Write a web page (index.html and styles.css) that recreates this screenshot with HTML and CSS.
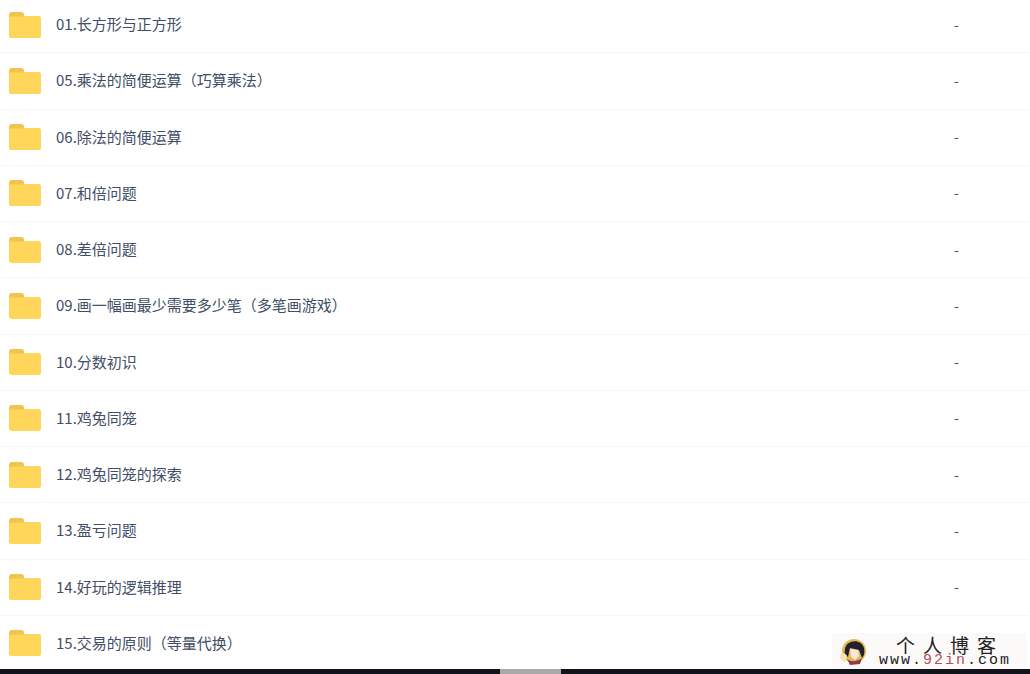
FILE: index.html
```html
<!DOCTYPE html>
<html>

    <head>
        <title>Files</title>
        <link rel="stylesheet" href="styles.css">
    </head>

    <body>
        <!-- Folder symbol, used by every row -->
        <svg class="hidden-defs" width="0" height="0">
            <symbol id="folder" viewBox="0 0 32 26">
                <path d="M0 3a3 3 0 0 1 3-3h9a3 3 0 0 1 3 3v3H0z" fill="#f3c350"/>
                <rect x="0" y="4" width="32" height="22" rx="2.500" fill="#ffd659"/>
                <path d="M0 6.500A2.500 2.500 0 0 1 2.500 4H15v.5H3A3 3 0 0 0 0 7.500z" fill="#f3c350"/>
            </symbol>
        </svg>

        <main class="file-list">
            <div class="file-row">
                <svg class="folder-icon"><use href="#folder"/></svg>
                <span class="file-name">01.长方形与正方形</span>
                <span class="file-size">-</span>
            </div>
            <div class="file-row">
                <svg class="folder-icon"><use href="#folder"/></svg>
                <span class="file-name">05.乘法的简便运算（巧算乘法）</span>
                <span class="file-size">-</span>
            </div>
            <div class="file-row">
                <svg class="folder-icon"><use href="#folder"/></svg>
                <span class="file-name">06.除法的简便运算</span>
                <span class="file-size">-</span>
            </div>
            <div class="file-row">
                <svg class="folder-icon"><use href="#folder"/></svg>
                <span class="file-name">07.和倍问题</span>
                <span class="file-size">-</span>
            </div>
            <div class="file-row">
                <svg class="folder-icon"><use href="#folder"/></svg>
                <span class="file-name">08.差倍问题</span>
                <span class="file-size">-</span>
            </div>
            <div class="file-row">
                <svg class="folder-icon"><use href="#folder"/></svg>
                <span class="file-name">09.画一幅画最少需要多少笔（多笔画游戏）</span>
                <span class="file-size">-</span>
            </div>
            <div class="file-row">
                <svg class="folder-icon"><use href="#folder"/></svg>
                <span class="file-name">10.分数初识</span>
                <span class="file-size">-</span>
            </div>
            <div class="file-row">
                <svg class="folder-icon"><use href="#folder"/></svg>
                <span class="file-name">11.鸡兔同笼</span>
                <span class="file-size">-</span>
            </div>
            <div class="file-row">
                <svg class="folder-icon"><use href="#folder"/></svg>
                <span class="file-name">12.鸡兔同笼的探索</span>
                <span class="file-size">-</span>
            </div>
            <div class="file-row">
                <svg class="folder-icon"><use href="#folder"/></svg>
                <span class="file-name">13.盈亏问题</span>
                <span class="file-size">-</span>
            </div>
            <div class="file-row">
                <svg class="folder-icon"><use href="#folder"/></svg>
                <span class="file-name">14.好玩的逻辑推理</span>
                <span class="file-size">-</span>
            </div>
            <!-- last row's size sits under the watermark -->
            <div class="file-row">
                <svg class="folder-icon"><use href="#folder"/></svg>
                <span class="file-name">15.交易的原则（等量代换）</span>
                <span class="file-size"></span>
            </div>
        </main>

        <!-- Watermark over the bottom right corner -->
        <div class="watermark">
            <svg class="mark-face" viewBox="0 0 26 27">
                <circle cx="14" cy="13" r="12" fill="#e3b94f"/>
                <path d="M5 11C6 2 21 0 24 10c1 5 0 8-2 10l-3-8-9-2-2 9C5 17 4 15 5 11z" fill="#23202b"/>
                <path d="M10 11l8 1 1 6-4 4-4-3z" fill="#f6e7da"/>
                <path d="M7 21c3 3 10 3 15-1l-2 6-10 1z" fill="#8b3a4a"/>
                <path d="M0 17c2-2 5-2 7 1l-1 6c-3 0-7-3-6-7z" fill="#f6e3b8"/>
            </svg>
            <div class="mark-text">
                <div class="mark-title">个人博客</div>
                <div class="mark-url">www.<span class="mark-red">92in</span>.com</div>
            </div>
        </div>

        <!-- Dark strip at the bottom with the grey thumb -->
        <footer class="bottom-strip">
            <div class="strip-thumb"></div>
        </footer>
    </body>

</html>
```

FILE: styles.css
```css
html, body {
    height: 100%;
}

body {
    margin: 0;
    overflow: hidden;
    display: flex;
    flex-direction: column;
    background-color: #fff;
    font-family: "Noto Sans CJK SC", "Liberation Sans", sans-serif;
}

.hidden-defs {
    position: absolute;
}

.file-list {
    flex: 1;
    min-height: 0;
    overflow: hidden;
}

.file-row {
    display: flex;
    align-items: center;
    box-sizing: border-box;
    height: 56.25px;
    padding-left: 9px;
    border-bottom: 1px solid #f4f6fb;
}

.file-row:first-child {
    margin-top: -3px;
}

.folder-icon {
    flex: 0 0 32px;
    width: 32px;
    height: 26px;
    margin-right: 15px;
}

.file-name {
    flex: 1;
    padding-bottom: 2px;
    font-size: 15px;
    color: #424e67;
}

.file-size {
    flex: 0 0 76px;
    padding-bottom: 2px;
    font-size: 14px;
    color: #424e67;
}

.bottom-strip {
    flex: 0 0 5px;
    padding-left: 500px;
    background-color: #12121a;
}

.strip-thumb {
    width: 61px;
    height: 5px;
    background-color: #a9a9a9;
}

.watermark {
    position: absolute;
    left: 832px;
    top: 633px;
    width: 195px;
    height: 36px;
    display: flex;
    align-items: center;
    background-color: #fbfaf9;
}

.mark-face {
    width: 26px;
    height: 27px;
    margin-left: 8px;
    margin-right: 13px;
}

.mark-text {
    color: #222;
}

.mark-title {
    padding-left: 17px;
    font-size: 19px;
    line-height: 19px;
    letter-spacing: 8px;
}

.mark-url {
    font-family: "Liberation Mono", monospace;
    font-size: 15px;
    line-height: 14px;
    letter-spacing: 2px;
    white-space: nowrap;
}

.mark-red {
    color: #b3505a;
}
```
